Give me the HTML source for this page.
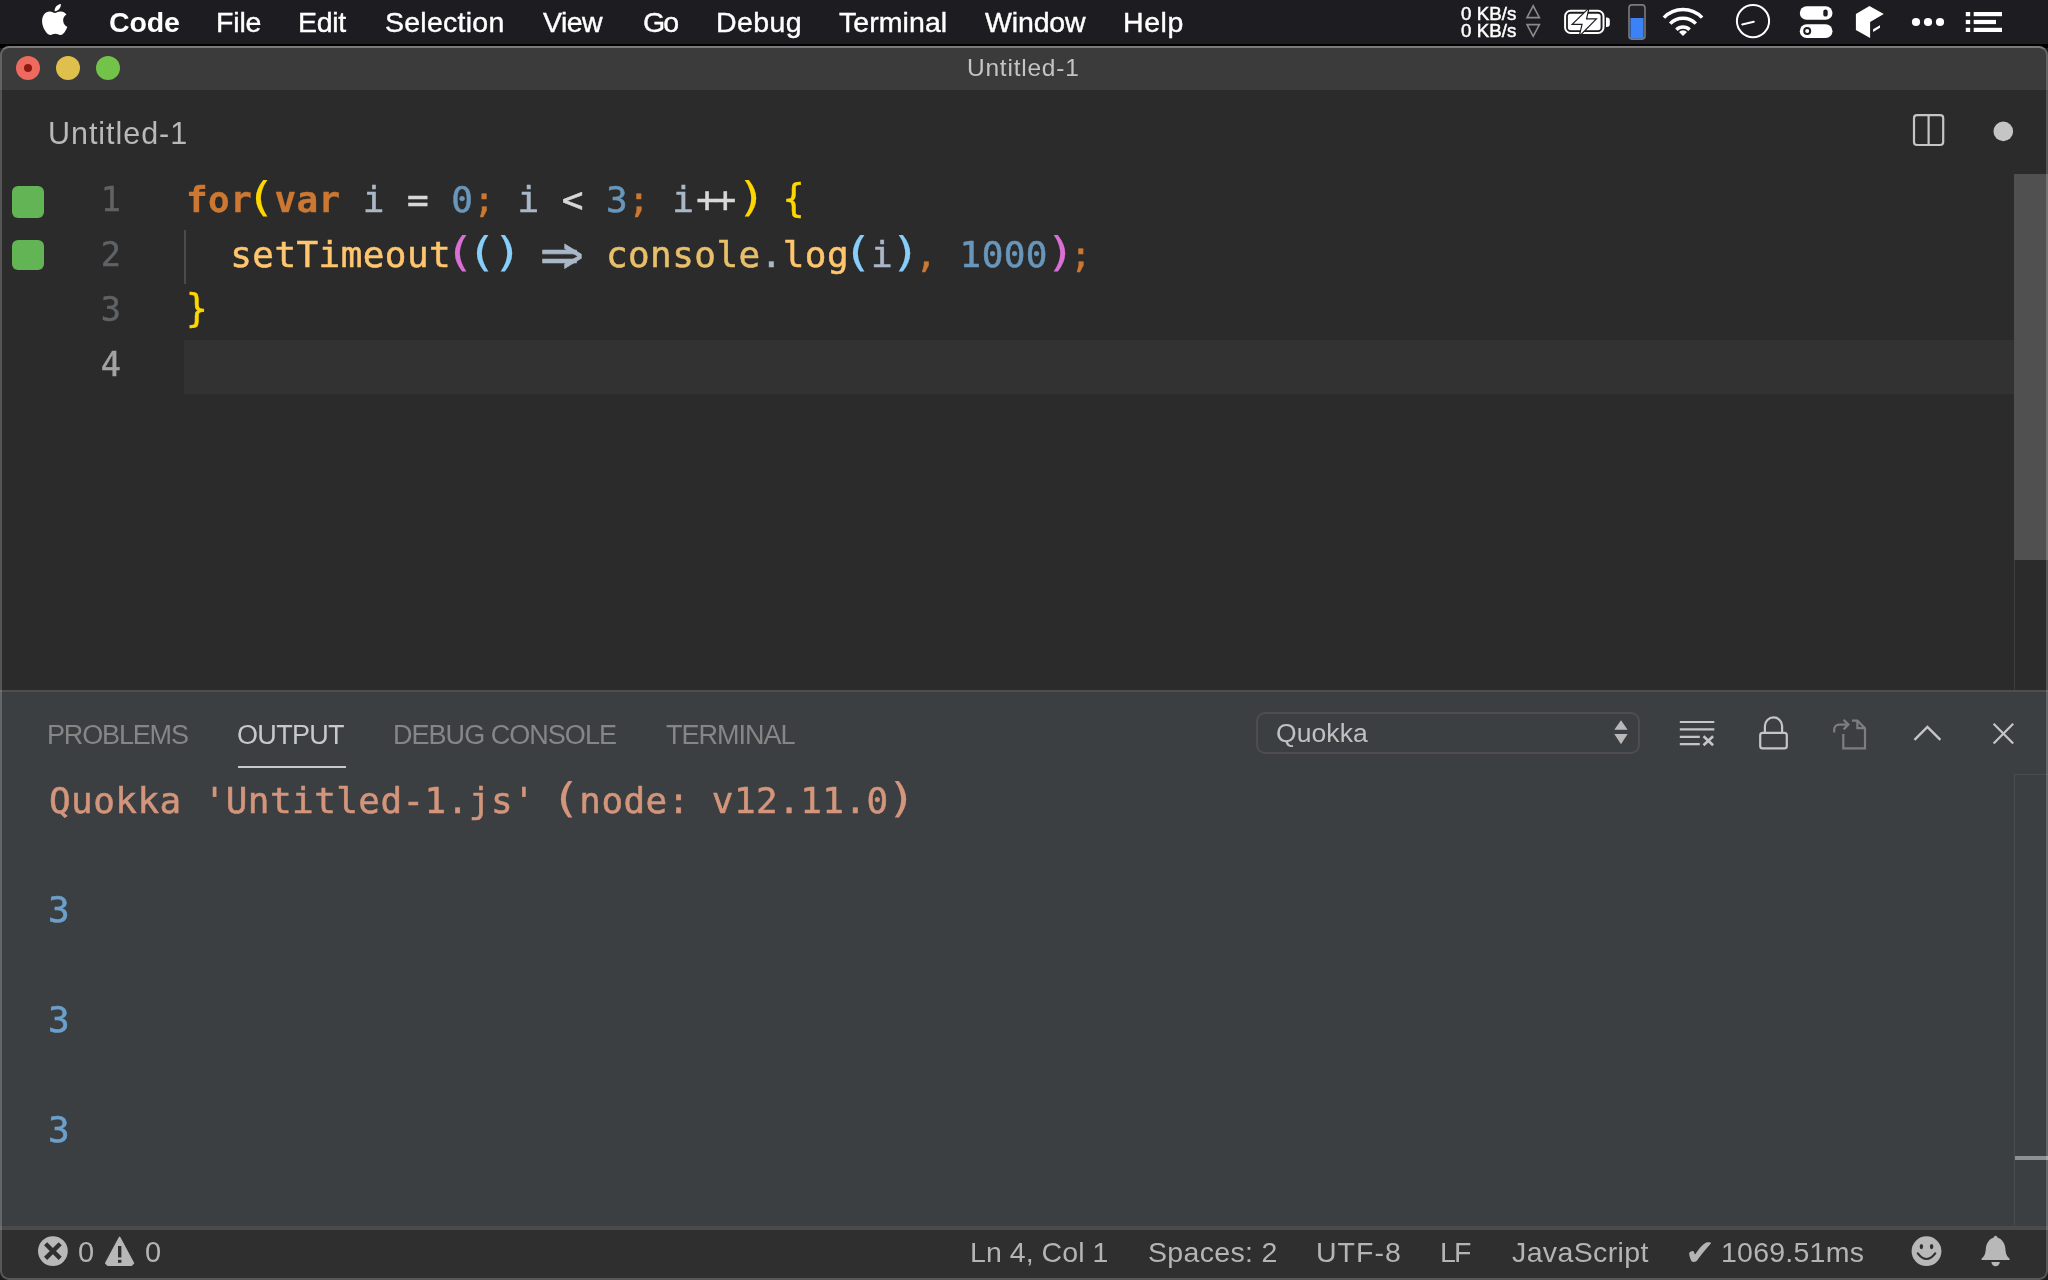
<!DOCTYPE html>
<html lang="en">
<head>
<meta charset="utf-8">
<title>Untitled-1</title>
<style>
*{box-sizing:border-box;margin:0;padding:0}
html,body{width:2048px;height:1280px;overflow:hidden;background:#1d1d21}
body{position:relative;font-family:"Liberation Sans",sans-serif}
.abs{position:absolute}
.t{position:absolute;white-space:pre;line-height:1}
.t,.code,.ln{will-change:transform}
#menubar{position:absolute;left:0;top:0;width:2048px;height:44px;background:#1d1d21}
#gap{position:absolute;left:0;top:44px;width:2048px;height:4px;background:#000}
#win{position:absolute;left:0;top:46px;width:2048px;height:1234px;background:#2b2b2b;border-radius:9px 9px 9px 9px;overflow:hidden}
#winborder{position:absolute;left:0;top:46px;width:2048px;height:1234px;border:2px solid rgba(255,255,255,0.2);border-top-color:rgba(255,255,255,0.32);border-radius:9px 9px 9px 9px;pointer-events:none}
#titlebar{position:absolute;left:0;top:0;width:2048px;height:44px;background:#3b3b3b}
#editor{position:absolute;left:0;top:44px;width:2048px;height:600px;background:#2b2b2b}
#panel{position:absolute;left:0;top:644px;width:2048px;height:538px;background:#3c3f41;border-top:2px solid #4e4e4e}
#status{position:absolute;left:0;top:1180px;width:2048px;height:54px;background:#2f2f2f;border-top:4px solid #4b4b4b}
.tl{position:absolute;top:56px;width:24px;height:24px;border-radius:50%}
.code{position:absolute;left:185.5px;font-family:"DejaVu Sans Mono","Liberation Mono",monospace;font-size:36px;letter-spacing:0.42px;line-height:55px;white-space:pre;color:#a9b7c6;-webkit-text-stroke:0.55px}
.ln{position:absolute;width:60px;left:60.5px;text-align:right;font-family:"DejaVu Sans Mono","Liberation Mono",monospace;font-size:33.6px;line-height:55px;color:#606366;-webkit-text-stroke:0.4px}
.kw{color:#cc7832;font-weight:bold;-webkit-text-stroke:0.3px}
.pu{color:#cc7832}
.nu{color:#6897bb}
.b1{color:#ffd700}
.b2{color:#da70d6}
.b3{color:#87cefa}
.b1,.b2,.b3{display:inline-block;transform:scaleY(1.07);transform-origin:50% 78%}
.po{display:inline-block;transform-origin:73% 84%;transform:scale(1.4,1.14);-webkit-text-stroke:0.15px}
.pc{display:inline-block;transform-origin:32% 84%;transform:scale(1.4,1.14);-webkit-text-stroke:0.15px}
.fn{color:#ffc66d}
.ob{color:#e8bf6a}
.op{color:#d8d8d8}
.arrow{color:#a9b7c6}
.arrow .eq{display:inline-block;transform-origin:0 58%;transform:translate(0px,1.9px) scale(1.8,1.3)}
.arrow .gt{display:inline-block;transform-origin:100% 58%;transform:translate(-1px,1.7px) scale(0.9,1.38)}
.pp{letter-spacing:-3.37px;margin-left:1.8px;margin-right:5.8px}
.sq{position:absolute;left:12px;width:32px;height:32px;border-radius:6px;background:#62b455}
</style>
</head>
<body>
<div id="menubar"></div>
<div id="gap"></div>
<div id="win">
  <div id="titlebar"></div>
  <div id="editor"></div>
  <div id="panel"></div>
  <div id="status"></div>
</div>

<!-- traffic lights -->
<div class="tl" style="left:16px;background:#ee6a5f"></div>
<div class="abs" style="left:24px;top:64px;width:8px;height:8px;border-radius:50%;background:#8c1a10"></div>
<div class="tl" style="left:56px;background:#e0c04c"></div>
<div class="tl" style="left:96px;background:#73c24a"></div>

<!-- editor: current line, scrollbar, guides -->
<div class="abs" style="left:184px;top:340px;width:1830px;height:54px;background:#323232"></div>
<div class="abs" style="left:2014px;top:174px;width:34px;height:386px;background:#505050"></div>
<div class="abs" style="left:2014px;top:560px;width:1px;height:130px;background:#3e3e3e"></div>
<div class="abs" style="left:184px;top:230px;width:2px;height:54px;background:#4b4b4b"></div>
<div class="sq" style="top:186px"></div>
<div class="sq" style="top:240px;height:30px"></div>

<div class="ln" style="top:172.2px">1</div>
<div class="ln" style="top:227.2px">2</div>
<div class="ln" style="top:282.2px">3</div>
<div class="ln" style="top:337.2px;color:#a4a3a3">4</div>

<div class="code" style="top:172px"><span class="kw">for</span><span class="b1 po">(</span><span class="kw">var</span> i <span class="op">=</span> <span class="nu">0</span><span class="pu">;</span> i <span class="op">&lt;</span> <span class="nu">3</span><span class="pu">;</span> i<span class="op pp">++</span><span class="b1 pc">)</span> <span class="b1">{</span></div>
<div class="code" style="top:227px">  <span class="fn">setTimeout</span><span class="b2 po">(</span><span class="b3 po">(</span><span class="b3 pc">)</span> <span class="arrow"><span class="eq">=</span><span class="gt">&gt;</span></span> <span class="ob">console</span>.<span class="fn">log</span><span class="b3 po">(</span>i<span class="b3 pc">)</span><span class="pu">,</span> <span class="nu">1000</span><span class="b2 pc">)</span><span class="pu">;</span></div>
<div class="code" style="top:282px"><span class="b1">}</span></div>

<!-- panel -->
<div class="abs" style="left:238px;top:766px;width:108px;height:2px;background:#c8c8c8"></div>
<div class="abs" style="left:1256px;top:712px;width:384px;height:42px;border:2px solid #4f4d4d;border-radius:9px"></div>
<div class="abs" style="left:2014px;top:774px;width:34px;height:452px;border-left:1px solid #4a4d4f;border-top:1px solid #4a4d4f"></div>
<div class="abs" style="left:2015px;top:1156px;width:33px;height:4px;background:#8d918f"></div>

<div class="code" style="left:48.7px;top:772.5px;color:#d3957b">Quokka 'Untitled-1.js' <span class="po">(</span>node: v12.11.0<span class="pc">)</span></div>
<div class="code" style="left:47.5px;top:882px;color:#6ca0cc">3</div>
<div class="code" style="left:47.5px;top:992px;color:#6ca0cc">3</div>
<div class="code" style="left:47.5px;top:1102px;color:#6ca0cc">3</div>

<span class="t" id="m_code" style="left:109.00px;top:7.87px;font-size:28.5px;color:#fff;font-weight:700;font-family:'Liberation Sans', sans-serif;letter-spacing:-0.167px;">Code</span>
<span class="t" id="m_file" style="left:216.00px;top:7.87px;font-size:28.5px;color:#fff;font-weight:400;font-family:'Liberation Sans', sans-serif;letter-spacing:-0.167px;-webkit-text-stroke:0.4px;">File</span>
<span class="t" id="m_edit" style="left:298.00px;top:7.87px;font-size:28.5px;color:#fff;font-weight:400;font-family:'Liberation Sans', sans-serif;letter-spacing:-0.333px;-webkit-text-stroke:0.4px;">Edit</span>
<span class="t" id="m_sel" style="left:385.00px;top:7.87px;font-size:28.5px;color:#fff;font-weight:400;font-family:'Liberation Sans', sans-serif;letter-spacing:0.250px;-webkit-text-stroke:0.4px;">Selection</span>
<span class="t" id="m_view" style="left:543.00px;top:7.87px;font-size:28.5px;color:#fff;font-weight:400;font-family:'Liberation Sans', sans-serif;letter-spacing:-0.583px;-webkit-text-stroke:0.4px;">View</span>
<span class="t" id="m_go" style="left:643.00px;top:7.87px;font-size:28.5px;color:#fff;font-weight:400;font-family:'Liberation Sans', sans-serif;letter-spacing:-2.000px;-webkit-text-stroke:0.4px;">Go</span>
<span class="t" id="m_debug" style="left:716.00px;top:7.87px;font-size:28.5px;color:#fff;font-weight:400;font-family:'Liberation Sans', sans-serif;letter-spacing:0.375px;-webkit-text-stroke:0.4px;">Debug</span>
<span class="t" id="m_term" style="left:839.00px;top:7.87px;font-size:28.5px;color:#fff;font-weight:400;font-family:'Liberation Sans', sans-serif;letter-spacing:0.071px;-webkit-text-stroke:0.4px;">Terminal</span>
<span class="t" id="m_win" style="left:985.00px;top:7.87px;font-size:28.5px;color:#fff;font-weight:400;font-family:'Liberation Sans', sans-serif;letter-spacing:-0.150px;-webkit-text-stroke:0.4px;">Window</span>
<span class="t" id="m_help" style="left:1123.00px;top:7.87px;font-size:28.5px;color:#fff;font-weight:400;font-family:'Liberation Sans', sans-serif;letter-spacing:0.583px;-webkit-text-stroke:0.4px;">Help</span>
<span class="t" id="kb1" style="left:1460.70px;top:5.17px;font-size:18.7px;color:#fff;font-weight:400;font-family:'Liberation Sans', sans-serif;letter-spacing:0.060px;-webkit-text-stroke:0.5px;">0 KB/s</span>
<span class="t" id="kb2" style="left:1460.70px;top:22.47px;font-size:18.7px;color:#fff;font-weight:400;font-family:'Liberation Sans', sans-serif;letter-spacing:0.060px;-webkit-text-stroke:0.5px;">0 KB/s</span>
<span class="t" id="title" style="left:966.80px;top:55.86px;font-size:24.5px;color:#c4c4c4;font-weight:400;font-family:'Liberation Sans', sans-serif;letter-spacing:0.767px;">Untitled-1</span>
<span class="t" id="tab" style="left:48.00px;top:117.78px;font-size:30.5px;color:#b9b9b9;font-weight:400;font-family:'Liberation Sans', sans-serif;letter-spacing:0.956px;">Untitled-1</span>
<span class="t" id="p1" style="left:46.80px;top:721.64px;font-size:27px;color:#868686;font-weight:400;font-family:'Liberation Sans', sans-serif;letter-spacing:-1.157px;">PROBLEMS</span>
<span class="t" id="p2" style="left:237.00px;top:721.64px;font-size:27px;color:#c8c8c8;font-weight:400;font-family:'Liberation Sans', sans-serif;letter-spacing:-0.680px;">OUTPUT</span>
<span class="t" id="p3" style="left:393.40px;top:721.64px;font-size:27px;color:#868686;font-weight:400;font-family:'Liberation Sans', sans-serif;letter-spacing:-0.967px;">DEBUG CONSOLE</span>
<span class="t" id="p4" style="left:666.00px;top:721.64px;font-size:27px;color:#868686;font-weight:400;font-family:'Liberation Sans', sans-serif;letter-spacing:-1.000px;">TERMINAL</span>
<span class="t" id="sel" style="left:1276.00px;top:719.77px;font-size:26.5px;color:#c0c0c0;font-weight:400;font-family:'Liberation Sans', sans-serif;letter-spacing:0.080px;">Quokka</span>
<span class="t" id="s_e0" style="left:78.00px;top:1238.05px;font-size:29px;color:#b4b4b4;font-weight:400;font-family:'Liberation Sans', sans-serif;letter-spacing:0.000px;">0</span>
<span class="t" id="s_w0" style="left:145.00px;top:1238.05px;font-size:29px;color:#b4b4b4;font-weight:400;font-family:'Liberation Sans', sans-serif;letter-spacing:0.000px;">0</span>
<span class="t" id="s_ln" style="left:970.00px;top:1237.67px;font-size:28.5px;color:#b4b4b4;font-weight:400;font-family:'Liberation Sans', sans-serif;letter-spacing:0.050px;">Ln 4, Col 1</span>
<span class="t" id="s_sp" style="left:1147.60px;top:1237.67px;font-size:28.5px;color:#b4b4b4;font-weight:400;font-family:'Liberation Sans', sans-serif;letter-spacing:0.325px;">Spaces: 2</span>
<span class="t" id="s_utf" style="left:1316.20px;top:1237.67px;font-size:28.5px;color:#b4b4b4;font-weight:400;font-family:'Liberation Sans', sans-serif;letter-spacing:1.000px;">UTF-8</span>
<span class="t" id="s_lf" style="left:1440.00px;top:1237.67px;font-size:28.5px;color:#b4b4b4;font-weight:400;font-family:'Liberation Sans', sans-serif;letter-spacing:-1.900px;">LF</span>
<span class="t" id="s_js" style="left:1512.40px;top:1237.67px;font-size:28.5px;color:#b4b4b4;font-weight:400;font-family:'Liberation Sans', sans-serif;letter-spacing:0.378px;">JavaScript</span>
<span class="t" id="s_ck" style="left:1684.80px;top:1234.93px;font-size:36px;color:#b4b4b4;font-weight:400;font-family:'DejaVu Sans', sans-serif;letter-spacing:0.000px;">✔</span>
<span class="t" id="s_ms" style="left:1720.60px;top:1237.67px;font-size:28.5px;color:#b4b4b4;font-weight:400;font-family:'Liberation Sans', sans-serif;letter-spacing:0.238px;">1069.51ms</span>

<svg class="abs" style="left:0;top:0" width="2048" height="48" viewBox="0 0 2048 48">
  <!-- apple -->
  <g transform="translate(39.2,4) scale(1.2917)" fill="#fff"><path d="M12.152 6.896c-.948 0-2.415-1.078-3.96-1.04-2.04.027-3.91 1.183-4.961 3.014-2.117 3.675-.546 9.103 1.519 12.09 1.013 1.454 2.208 3.09 3.792 3.039 1.52-.065 2.09-.987 3.935-.987 1.831 0 2.35.987 3.96.948 1.637-.026 2.676-1.48 3.676-2.948 1.156-1.688 1.636-3.325 1.662-3.415-.039-.013-3.182-1.221-3.22-4.857-.026-3.04 2.48-4.494 2.597-4.559-1.429-2.09-3.623-2.324-4.39-2.376-2-.156-3.675 1.09-4.61 1.09zM15.53 3.83c.843-1.012 1.4-2.427 1.245-3.83-1.207.052-2.662.805-3.532 1.818-.78.896-1.454 2.338-1.273 3.714 1.338.104 2.715-.688 3.559-1.701"/></g>
  <!-- net arrows -->
  <path d="M1527 17.6 L1533.2 5.8 L1539.4 17.6 Z" fill="none" stroke="#8a8a8a" stroke-width="1.6" stroke-linejoin="miter"/>
  <path d="M1527 24.6 L1539.4 24.6 L1533.2 36.2 Z" fill="none" stroke="#8a8a8a" stroke-width="1.6" stroke-linejoin="miter"/>
  <!-- battery -->
  <rect x="1565.1" y="10.8" width="38.4" height="22.2" rx="5.5" fill="none" stroke="#fff" stroke-width="2"/>
  <rect x="1567.9" y="13.7" width="32.7" height="16.5" rx="2.6" fill="#fff"/>
  <path d="M1606 17.4 h0.8 a3 3 0 0 1 3 3 v3.6 a3 3 0 0 1 -3 3 h-0.8 Z" fill="#fff"/>
  <path d="M1588 9.8 L1573.6 23.8 L1582.8 23.8 L1580.2 34.6 L1595 19.4 L1585.8 19.4 Z" fill="#fff" stroke="#1d1d21" stroke-width="2.4" stroke-linejoin="miter" paint-order="stroke"/>
  <!-- memory -->
  <rect x="1629" y="4.9" width="16" height="34.2" rx="3" fill="#232327" stroke="#7c7c7c" stroke-width="1.6"/>
  <rect x="1630.4" y="18" width="13.2" height="20.4" fill="#3b82f7"/>
  <!-- wifi -->
  <g fill="none" stroke="#fff" stroke-width="3.5" stroke-linecap="butt">
    <path d="M1663.9 17.6 A26.5 26.5 0 0 1 1702.1 17.6"/>
    <path d="M1670.2 23.6 A17.8 17.8 0 0 1 1695.8 23.6"/>
    <path d="M1676.4 29.7 A9.2 9.2 0 0 1 1689.6 29.7"/>
  </g>
  <path d="M1683 36 L1679 32 A5.6 5.6 0 0 1 1687 32 Z" fill="#fff"/>
  <!-- clock -->
  <circle cx="1753" cy="21.1" r="16.1" fill="none" stroke="#fff" stroke-width="2"/>
  <path d="M1742.2 24.4 L1753.8 21.8" stroke="#fff" stroke-width="2" stroke-linecap="round"/>
  <!-- toggles -->
  <rect x="1799.8" y="6.2" width="32.7" height="13.6" rx="6.8" fill="#fff"/>
  <rect x="1823.3" y="9.4" width="4.4" height="7.2" rx="2.2" fill="#1d1d21"/>
  <rect x="1799.8" y="24.3" width="32.7" height="13.7" rx="6.85" fill="#fff"/>
  <circle cx="1807.2" cy="31.1" r="3" fill="#fff" stroke="#1d1d21" stroke-width="2"/>
  <!-- cube -->
  <path d="M1869.4 5.9 L1883.8 13.9 L1870.1 22 L1870.1 38.1 L1855.9 30 L1855.9 13.9 Z" fill="#fff"/>
  <path d="M1873.1 29.3 L1880 25.2 L1880 27.8 L1873.1 31.9 Z" fill="#fff"/>
  <!-- dots -->
  <circle cx="1916" cy="22" r="4.1" fill="#fff"/><circle cx="1928" cy="22" r="4.1" fill="#fff"/><circle cx="1940" cy="22" r="4.1" fill="#fff"/>
  <!-- list -->
  <g fill="#fff">
    <rect x="1965.8" y="12" width="4.4" height="4.2"/><rect x="1973.7" y="12" width="28.3" height="4.2"/>
    <rect x="1965.8" y="19.9" width="4.4" height="4.2"/><rect x="1973.7" y="19.9" width="22.3" height="4.2"/>
    <rect x="1965.8" y="27.8" width="4.4" height="4.2"/><rect x="1973.7" y="27.8" width="28.3" height="4.2"/>
  </g>
</svg>

<!-- editor actions -->
<svg class="abs" style="left:1900px;top:104px" width="130" height="54" viewBox="1900 104 130 54">
  <rect x="1914" y="115.2" width="29.2" height="29.8" rx="3" fill="none" stroke="#c5c5c5" stroke-width="2.2"/>
  <path d="M1928.6 115.2 V145" stroke="#c5c5c5" stroke-width="2.2"/>
  <circle cx="2003.3" cy="131.4" r="9.8" fill="#c5c5c5"/>
</svg>

<!-- panel actions -->
<svg class="abs" style="left:1600px;top:700px" width="440" height="66" viewBox="1600 700 440 66">
  <path d="M1614.3 729.8 L1621 720.2 L1627.6 729.8 Z M1614.3 734 L1627.6 734 L1621 744.2 Z" fill="#b8b8b8"/>
  <g stroke="#c5c5c5" stroke-width="2.2" fill="none">
    <path d="M1679.8 722 H1714.3 M1679.8 729.4 H1714.3 M1679.8 736.8 H1699.8 M1679.8 744.2 H1699.8"/>
    <path d="M1703.5 736.3 L1713.1 745.3 M1713.1 736.3 L1703.5 745.3" stroke-width="2.6"/>
    <rect x="1760.2" y="732.8" width="26.6" height="15.6" rx="2.5"/>
    <path d="M1764.9 732.8 V726 A8.6 8.6 0 0 1 1782.1 726 V732.8"/>
    <path d="M1914.5 739.8 L1927.4 727 L1940.4 739.8" stroke-width="2.4"/>
    <path d="M1993.6 723.8 L2013.2 743.6 M2013.2 723.8 L1993.6 743.6" stroke-width="2.2"/>
  </g>
  <g stroke="#7e7e7e" stroke-width="2.2" fill="none">
    <path d="M1852 720.6 H1857.4 L1865 728.2 V748.4 H1843.3 V734"/>
    <path d="M1857.4 720.6 V728.2 H1865"/>
    <path d="M1834.2 732.4 V729.6 A5 5 0 0 1 1839.2 724.6 H1848"/>
    <path d="M1843.6 719.8 L1848.4 724.6 L1843.6 729.4"/>
  </g>
</svg>

<!-- status icons -->
<svg class="abs" style="left:30px;top:1232px" width="140" height="40" viewBox="30 1232 140 40">
  <circle cx="52.9" cy="1251.1" r="14.9" fill="#b8b8b8"/>
  <path d="M45.6 1243.8 L60.2 1258.4 M60.2 1243.8 L45.6 1258.4" stroke="#2f2f2f" stroke-width="4.4"/>
  <path d="M119.6 1237.4 L133.4 1263.2 L131.4 1265.2 L107.8 1265.2 L105.8 1263.2 Z" fill="#b8b8b8" stroke="#b8b8b8" stroke-width="1.6" stroke-linejoin="round"/>
  <rect x="118" y="1246" width="3.4" height="11.4" fill="#2f2f2f"/>
  <rect x="118" y="1259.8" width="3.4" height="3" fill="#2f2f2f"/>
</svg>
<svg class="abs" style="left:1900px;top:1232px" width="130" height="40" viewBox="1900 1232 130 40">
  <circle cx="1926.5" cy="1251.2" r="14.9" fill="#b8b8b8"/>
  <ellipse cx="1921.4" cy="1246.6" rx="1.7" ry="2.6" fill="#2f2f2f"/>
  <ellipse cx="1931.6" cy="1246.6" rx="1.7" ry="2.6" fill="#2f2f2f"/>
  <path d="M1917.8 1253.4 Q1926.5 1264.6 1935.2 1253.4" fill="none" stroke="#2f2f2f" stroke-width="2.2" stroke-linecap="round"/>
  <path d="M1995.6 1235.8 C1996.6 1235.8 1997.2 1236.6 1997.4 1237.6 C2002 1239 2005 1243.6 2005.4 1249 C2005.8 1254 2006.8 1256.4 2009.6 1258.6 L2009.6 1260 L1981.6 1260 L1981.6 1258.6 C1984.4 1256.4 1985.4 1254 1985.8 1249 C1986.2 1243.6 1989.2 1239 1993.8 1237.6 C1994 1236.6 1994.6 1235.8 1995.6 1235.8 Z" fill="#b8b8b8"/>
  <path d="M1991.4 1262 H1999.8 A4.2 4.2 0 0 1 1991.4 1262 Z" fill="#b8b8b8"/>
</svg>


<div id="winborder"></div>
</body>
</html>
